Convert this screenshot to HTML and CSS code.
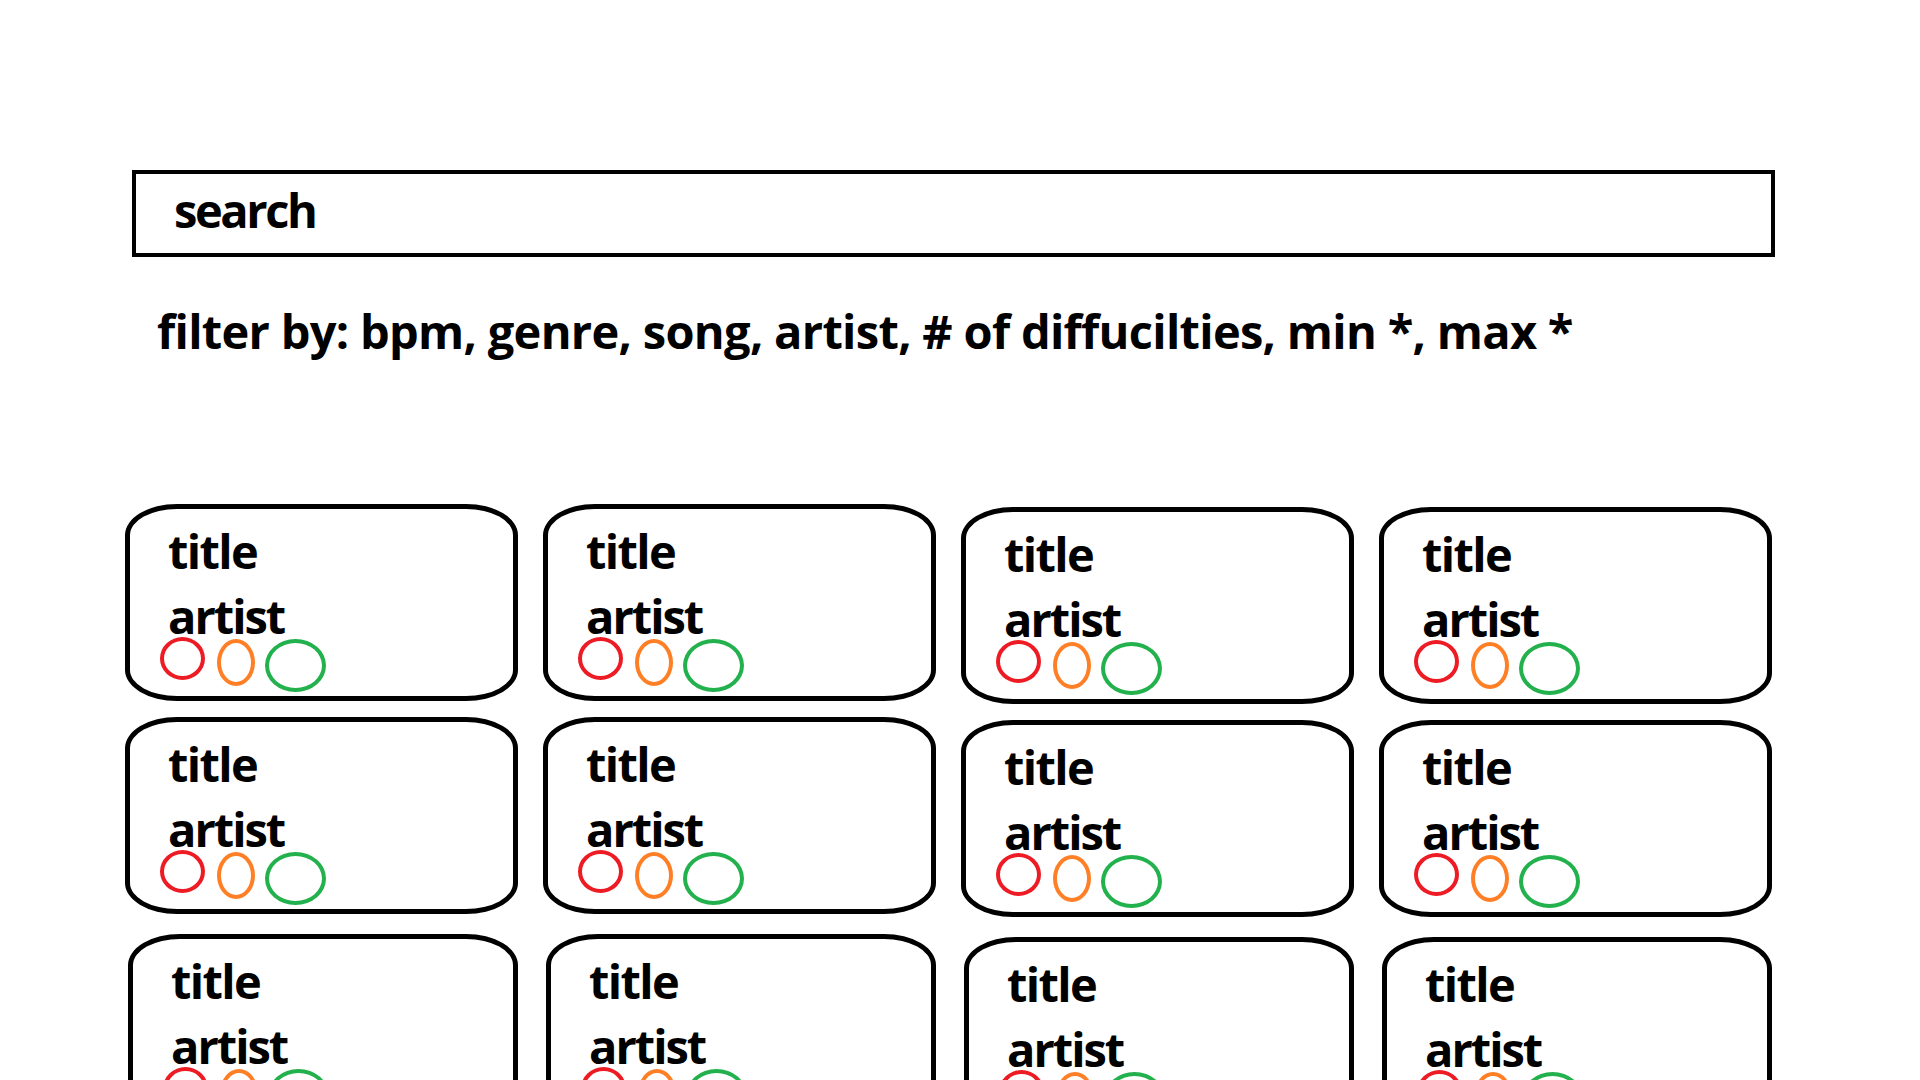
FILE: index.html
```html
<!DOCTYPE html>
<html lang="en">
<head>
<meta charset="utf-8">
<title>song search</title>
<link rel="stylesheet" href="styles.css">
</head>
<body>
<main class="page">
  <div class="search">search</div>
  <p class="filter">filter by: bpm, genre, song, artist, # of diffucilties, min *, max *</p>
  <section class="grid">
    <div class="card"><div class="title">title</div><div class="artist">artist</div><div class="diffs"><span class="d red"></span><span class="d orange"></span><span class="d green"></span></div></div>
    <div class="card"><div class="title">title</div><div class="artist">artist</div><div class="diffs"><span class="d red"></span><span class="d orange"></span><span class="d green"></span></div></div>
    <div class="card"><div class="title">title</div><div class="artist">artist</div><div class="diffs"><span class="d red"></span><span class="d orange"></span><span class="d green"></span></div></div>
    <div class="card"><div class="title">title</div><div class="artist">artist</div><div class="diffs"><span class="d red"></span><span class="d orange"></span><span class="d green"></span></div></div>
    <div class="card"><div class="title">title</div><div class="artist">artist</div><div class="diffs"><span class="d red"></span><span class="d orange"></span><span class="d green"></span></div></div>
    <div class="card"><div class="title">title</div><div class="artist">artist</div><div class="diffs"><span class="d red"></span><span class="d orange"></span><span class="d green"></span></div></div>
    <div class="card"><div class="title">title</div><div class="artist">artist</div><div class="diffs"><span class="d red"></span><span class="d orange"></span><span class="d green"></span></div></div>
    <div class="card"><div class="title">title</div><div class="artist">artist</div><div class="diffs"><span class="d red"></span><span class="d orange"></span><span class="d green"></span></div></div>
    <div class="card"><div class="title">title</div><div class="artist">artist</div><div class="diffs"><span class="d red"></span><span class="d orange"></span><span class="d green"></span></div></div>
    <div class="card"><div class="title">title</div><div class="artist">artist</div><div class="diffs"><span class="d red"></span><span class="d orange"></span><span class="d green"></span></div></div>
    <div class="card"><div class="title">title</div><div class="artist">artist</div><div class="diffs"><span class="d red"></span><span class="d orange"></span><span class="d green"></span></div></div>
    <div class="card"><div class="title">title</div><div class="artist">artist</div><div class="diffs"><span class="d red"></span><span class="d orange"></span><span class="d green"></span></div></div>
  </section>
</main>
</body>
</html>
```

FILE: styles.css
```css
html, body {
  margin: 0;
  background: #ffffff;
  color: #000000;
  font-family: "Open Sans", "Noto Sans", "DejaVu Sans", sans-serif;
  font-weight: 750;
  overflow: hidden;
}

.page {
  padding: 170px 0 0 125px;
}

.search {
  box-sizing: border-box;
  margin-left: 7px;
  width: 1643px;
  height: 87px;
  border: 4px solid #000;
  display: flex;
  align-items: center;
  padding: 0 0 7px 38px;
  font-size: 47px;
  line-height: 47px;
  letter-spacing: -2.4px;
}

.filter {
  margin: 51px 0 0 32px;
  font-size: 47px;
  line-height: 47px;
  letter-spacing: -0.7px;
}

.grid {
  margin-top: 149px;
  display: grid;
  grid-template-columns: repeat(4, 393px);
  align-items: start;
  column-gap: 25px;
  row-gap: 13px;
}

.card {
  box-sizing: border-box;
  height: 197px;
  border: 5px solid #000;
  border-radius: 52px / 31px;
  padding: 19px 0 0 30px;
}

.card:nth-child(4n+3),
.card:nth-child(4n+4) {
  margin-top: 3px;
}

.card:nth-child(n+9) {
  margin-left: 3px;
  margin-top: 4px;
}

.card:nth-child(11),
.card:nth-child(12) {
  margin-top: 7px;
}

.title,
.artist {
  font-size: 47px;
  line-height: 47px;
  margin-left: 8px;
  letter-spacing: -1.6px;
}

.artist {
  letter-spacing: -2px;
}

.title {
  margin-bottom: 18px;
}

.diffs {
  display: flex;
  align-items: flex-start;
  margin-top: -3px;
}

.d {
  box-sizing: border-box;
  display: block;
  border-style: solid;
  border-width: 4px;
  border-radius: 50%;
}

.red {
  width: 45px;
  height: 43px;
  border-color: #ed1c24;
}

.orange {
  width: 38px;
  height: 47px;
  margin: 2px 0 0 12px;
  border-color: #ff7f27;
}

.green {
  width: 61px;
  height: 53px;
  margin: 2px 0 0 10px;
  border-color: #22b14c;
}
```
